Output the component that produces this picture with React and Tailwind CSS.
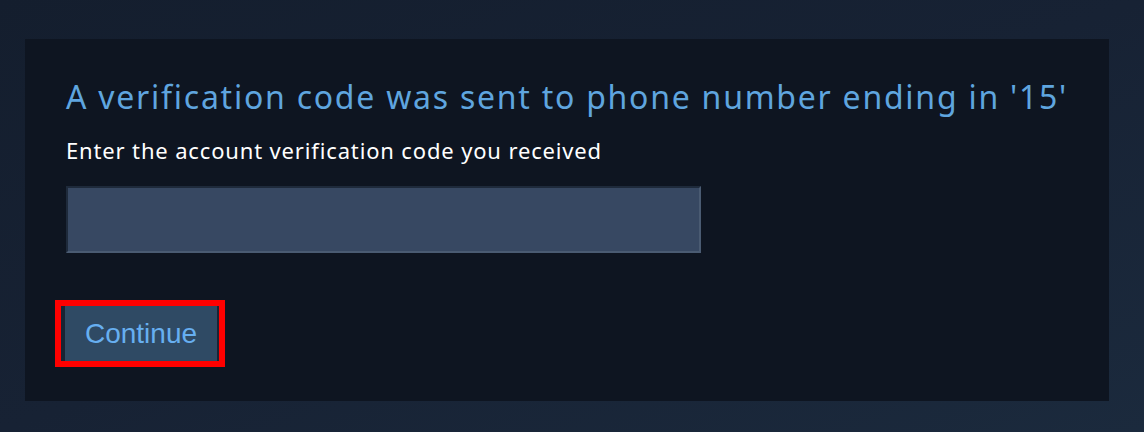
import React from "react";

const App = () => {
  return (
    <div className="w-[1144px] h-[432px] bg-gradient-to-br from-[#141e2e] via-[#172234] to-[#1b2a3d] pt-[39px] pl-[25px]">
      <div className="w-[1084px] h-[362px] bg-[#0e1521] pl-[41px] pt-[38px]">
        {/* heading */}
        <h1 className="text-[32px] leading-[40px] text-[#5fa5df] font-['Noto_Sans',sans-serif] font-normal tracking-[1.75px]">
          A verification code was sent to phone number ending in '15'
        </h1>
        <p className="mt-[19px] text-[22px] leading-[28px] text-white font-['Noto_Sans',sans-serif] tracking-[0.85px]">
          Enter the account verification code you received
        </p>

        <input
          type="text"
          className="mt-[22px] block w-[635px] h-[67px] bg-[#374862] border-t-2 border-l-2 border-b-2 border-r-2 border-t-[#1e2a3b] border-l-[#1e2a3b] border-b-[#4a5b72] border-r-[#4a5b72] outline-none"
        />

        <div className="mt-[47px] ml-[-11px] w-[170px] h-[67px] border-[6px] border-[#ff0000] flex">
          <button className="h-full w-full bg-[#2f4a64] border-l-4 border-l-[#1a2434] border-r-2 border-r-[#1a2434] text-[28px] text-[#67aff0] font-['Liberation_Sans',Arial,sans-serif] flex items-center justify-center">
            Continue
          </button>
        </div>
      </div>
    </div>
  );
};

export default App;
